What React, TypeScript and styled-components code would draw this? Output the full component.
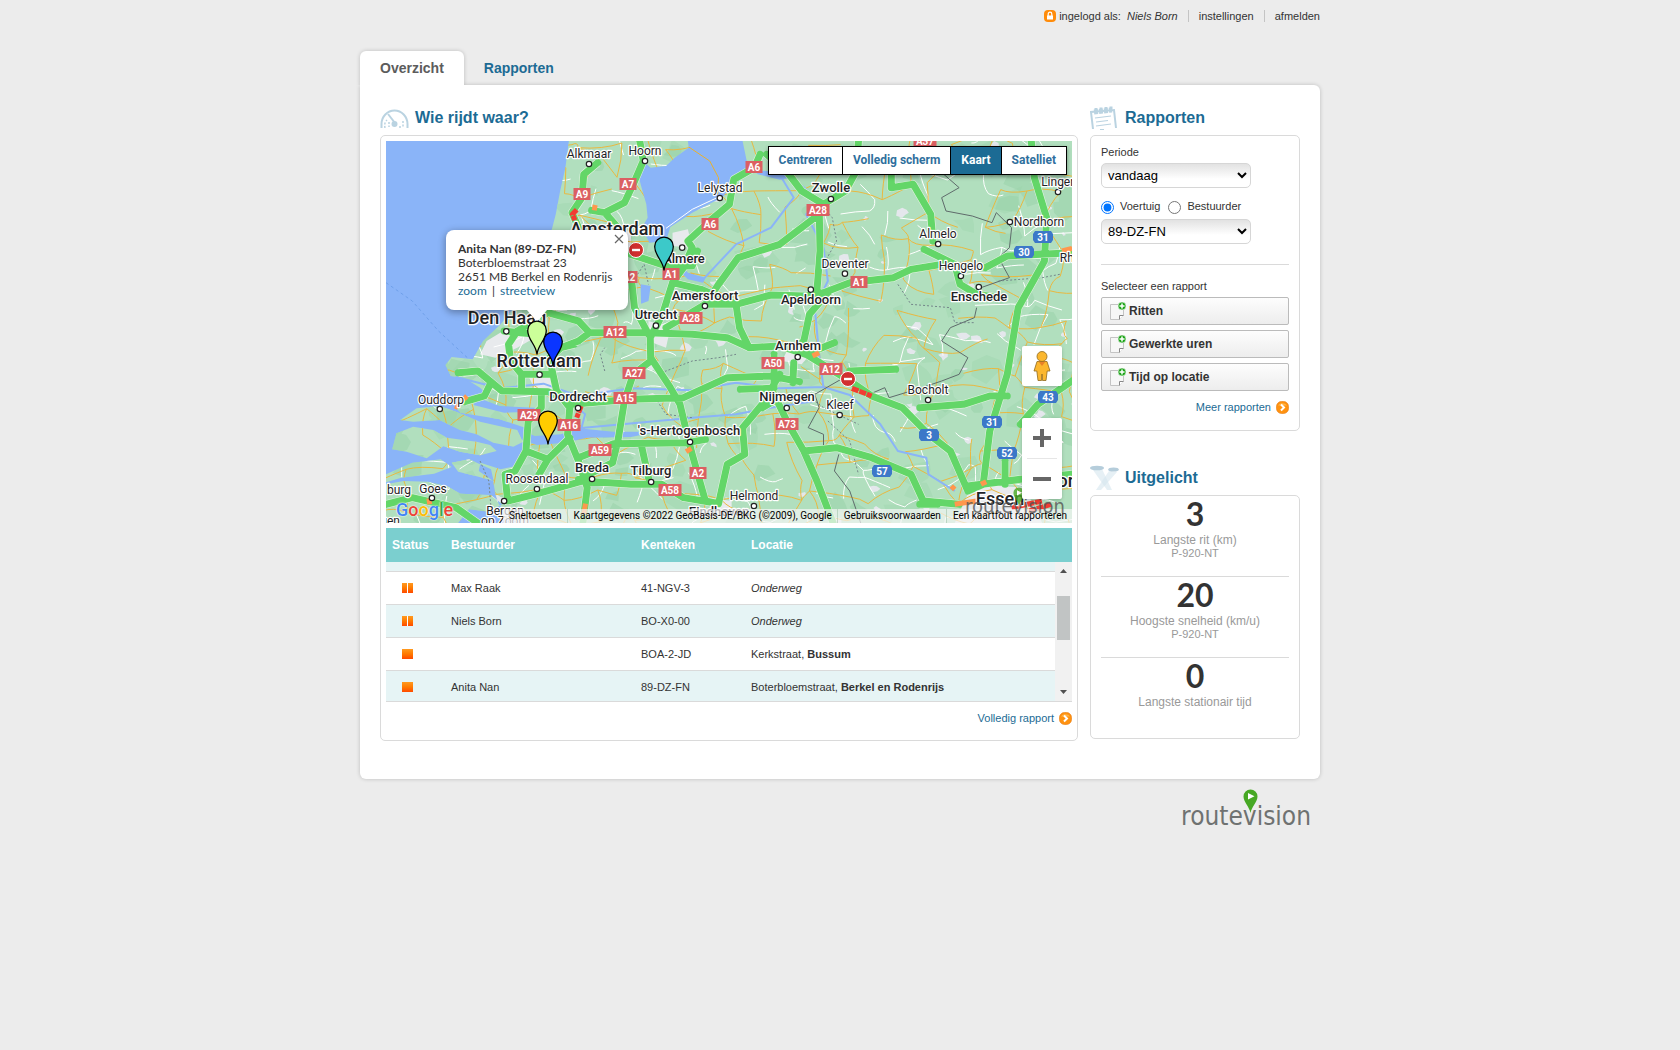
import React, { useLayoutEffect, useRef } from "react";
import styled, { createGlobalStyle } from "styled-components";

const blue = "#1c6b94";
const line = "#dadada";

const GlobalStyle = createGlobalStyle`
  *, *::before, *::after { box-sizing: border-box; }
  body {
    margin: 0;
    background: #ececec;
    color: #333;
    font: 11px/14px "Liberation Sans", Arial, sans-serif;
  }
  a { color: ${blue}; text-decoration: none; }
  button, select { font-family: inherit; }
`;

const Page = styled.div`
  width: 100%;
  max-width: 960px;
  margin: 0 auto;
`;

const UserBar = styled.header`
  display: flex;
  justify-content: flex-end;
  align-items: center;
  height: 32px;
`;

const UserItem = styled.span`
  display: flex;
  align-items: center;
  gap: 3px;
  & + & {
    margin-left: 10px;
    padding-left: 10px;
    border-left: 1px solid #c4c4c4;
    line-height: 12px;
  }
  a { color: #333; }
  em { margin-left: 3px; }
`;

const Tabs = styled.nav`
  display: flex;
  margin-top: 19px;
`;

const Tab = styled.a<{ $active?: boolean }>`
  padding: 0 20px;
  font-size: 14px;
  font-weight: bold;
  line-height: 34px;
  border-radius: 6px 6px 0 0;
  color: ${(p) => (p.$active ? "#5c5c5c" : blue)};
  background: ${(p) => (p.$active ? "#fff" : "transparent")};
  box-shadow: ${(p) => (p.$active ? "0 0 4px rgba(0, 0, 0, 0.2)" : "none")};
  clip-path: inset(-4px -4px 0 -4px);
`;

const Card = styled.main`
  display: grid;
  grid-template-columns: minmax(0, 1fr) 210px;
  gap: 12px;
  padding: 16px 20px 38px;
  background: #fff;
  border-radius: 0 6px 6px 6px;
  box-shadow: 0 0 4px rgba(0, 0, 0, 0.2);
`;

const Heading = styled.div`
  display: grid;
  grid-template-columns: 35px 1fr;
  align-items: center;
  height: 34px;
  h2 {
    margin: 0;
    color: ${blue};
    font-size: 16px;
    line-height: 20px;
  }
`;

const Panel = styled.section<{ $pad: string }>`
  padding: ${(p) => p.$pad};
  border: 1px solid ${line};
  border-radius: 5px;
`;

const Side = styled.aside`
  display: flex;
  flex-direction: column;
  gap: 30px;
`;

const MoreLink = styled.a`
  display: flex;
  justify-content: flex-end;
  align-items: center;
  gap: 5px;
`;

/* ---------- map ---------- */

const MapFrame = styled.div`
  position: relative;
  height: 382px;
  overflow: hidden;
  background: #8ab4f8;
  font-family: Roboto, "Liberation Sans", sans-serif;
`;

const MapDrawing = styled.svg`
  position: absolute;
  inset: 0;
  width: 100%;
  height: 100%;
`;

const MapButtons = styled.div`
  position: absolute;
  top: 5px;
  right: 5px;
  display: flex;
  border: 1px solid #000;
  box-shadow: 0 2px 4px rgba(0, 0, 0, 0.4);
`;

const MapButton = styled.button<{ $active?: boolean }>`
  height: 27px;
  padding: 0 10px 2px;
  border: 0;
  font: 700 12px/24px Roboto, sans-serif;
  color: ${(p) => (p.$active ? "#fff" : "#2f6f9d")};
  background: ${(p) => (p.$active ? blue : "#fff")};
  & + & { border-left: 1px solid #000; }
`;

const InfoWindow = styled.div`
  position: absolute;
  left: 60px;
  top: 89px;
  width: 182px;
  height: 80px;
  padding: 12px 12px;
  border-radius: 8px;
  background: #fff;
  box-shadow: 0 2px 7px 1px rgba(0, 0, 0, 0.3);
  font: 12px/14px Lato, sans-serif;
  white-space: nowrap;
  &::after {
    content: "";
    position: absolute;
    left: 81px;
    top: 80px;
    border: 10px solid transparent;
    border-top: 12px solid #fff;
    border-bottom: 0;
  }
`;

const Divider = styled.span`
  margin: 0 2px;
`;

const CloseButton = styled.button`
  position: absolute;
  top: 3px;
  right: 3px;
  width: 12px;
  height: 12px;
  padding: 1px;
  border: 0;
  background: none;
  svg { display: block; }
`;

const PinLayer = styled(MapDrawing)`
  pointer-events: none;
`;

const MapControl = styled.div<{ $bottom: number }>`
  position: absolute;
  right: 10px;
  bottom: ${(p) => p.$bottom}px;
  width: 40px;
  background: #fff;
  border-radius: 2px;
  box-shadow: 0 1px 4px -1px rgba(0, 0, 0, 0.3);
  button {
    display: grid;
    place-items: center;
    width: 100%;
    height: 40px;
    padding: 0;
    border: 0;
    background: none;
  }
  hr {
    margin: 0 5px;
    border: 0;
    border-top: 1px solid #e6e6e6;
  }
`;

const Attribution = styled.div`
  position: absolute;
  right: 0;
  bottom: 0;
  display: flex;
  background: rgba(245, 245, 245, 0.7);
  font-size: 10px;
  line-height: 14px;
  white-space: nowrap;
  > * {
    padding: 0 5px 0 6px;
    color: #000;
  }
  > * + * { border-left: 1px solid rgba(150, 190, 160, 0.5); }
`;

const GoogleMark = styled.div`
  position: absolute;
  left: 10px;
  bottom: 4px;
  font: 500 18px/18px Roboto, sans-serif;
  text-shadow: 0 0 1px #fff, 0 0 2px #fff;
`;

const Letter = styled.span<{ $c: string }>`
  color: ${(p) => p.$c};
`;

/* Everything below is surveyed on a 1568 x 1146 grid; the map is 686 x 382. */
const GX = 686 / 1568;
const GY = 1 / 3;

const land = [
  "M418 0L410 80 398 150 388 220 380 260 360 350 310 470 262 550 222 600 198 655 150 648 136 672 148 705 180 712 215 740 232 762 200 775 160 800 170 815 260 835 318 860 330 900 315 940 296 975 262 985 216 965 212 990 245 1020 250 1060 258 1090 300 1146 1568 1146 1568 0Z",
  "M32 837L70 802 123 795 169 817 215 842 300 867 314 902 291 917 245 905 207 880 169 867 123 837 62 842Z",
  "M24 877L62 857 108 867 139 890 207 902 238 912 253 930 215 943 169 932 131 916 93 952 47 932 14 925Z",
  "M0 1000L60 965 125 955 150 978 110 998 35 1010 0 1024Z",
  "M150 965L190 955 240 985 246 1020 205 1005 165 992Z",
  "M0 1030L40 1020 95 1022 140 1036 170 1058 240 1062 266 1090 235 1112 190 1105 165 1146 0 1146Z",
];

const water = [
  "M690 0L692 20 660 50 640 75 605 80 585 58 575 90 582 130 595 190 598 230 585 260 602 305 640 300 650 258 700 215 770 168 796 120 828 82 815 0Z",
  "M300 862L340 885 400 880 440 862 520 872 620 872 560 888 460 890 410 905 345 912 310 895Z",
  "M840 88L905 92 925 110 900 116 850 100Z",
  "M582 430L605 435 600 480 583 488Z",
  "M640 320L690 395 730 410 725 425 690 415 640 350Z",
  "M210 770L260 795 340 800 350 812 270 815 200 792Z",
];

const rivers = [
  "M160 708L260 742 360 728 440 765 560 742 700 748 800 725 900 742 1000 738 1060 762 1130 850 1170 930 1235 950 1240 1000 1300 1050",
  "M725 415L750 380 800 310 880 260 932 170 905 112",
  "M440 862L540 850 700 830 800 820 880 800 980 780",
  "M1000 740L990 640 980 500 1010 420 1000 320 960 220 990 180 920 100",
  "M400 900L445 870 455 820 430 790",
];

const motorways = [
  "M484 65L452 100 448 170 425 215 440 260",
  "M580 0L588 60 565 130 545 185 500 215 470 208M500 215L530 260",
  "M855 40L842 80 795 115 785 190 740 240 690 300 700 320 680 380 655 425",
  "M560 340L640 375 700 375 712 330M655 425L720 445 800 490 880 462 960 465 1000 455 1060 425 1160 410 1200 385 1270 370",
  "M640 560L730 490 760 430 805 350 900 310 985 225 1000 190 950 150 915 90 870 40M1000 190L1050 150 1075 90 1080 0",
  "M990 190L992 330 985 450M1010 455L968 520 955 600 935 620",
  "M655 425L632 520 604 590 605 660 565 700 545 780 530 900 518 965 440 1015",
  "M560 400L568 500 600 580M605 650L650 740 672 790 690 890 700 940 730 1080 760 1088 780 970 820 940 815 860 860 790 900 700",
  "M300 570L370 515 440 540 465 575 600 575 700 580 780 590 830 620 900 615 960 640 1060 720 1110 765 1180 800 1240 880 1290 930 1330 1050",
  "M740 490L800 490 808 560 830 620M440 600L465 575M440 600L400 620 375 650",
  "M165 695L210 690 265 750 370 752 400 770 425 790 560 775 680 770 780 710 880 705 945 722 M930 725L932 665",
  "M375 660L390 750 420 800 415 880 440 960 460 1040 450 1146",
  "M355 760L355 800 325 840 320 930 295 990 272 1000 278 1080 340 1060 450 1020 560 1030 630 1030 680 1070 760 1088",
  "M320 930L370 955 420 890M370 955L350 1000M440 950L520 908 690 905 730 895M585 920L600 1010",
  "M810 745L880 742 920 850 955 930 1030 920 1110 950 1200 1000 1228 1080 1310 1090M955 930L985 1020 1022 1146",
  "M1475 0L1482 110 1510 230 1505 360 1445 500 1420 700 1380 870 1365 1030 1330 1050",
  "M1370 380L1420 345 1568 335M1155 90L1155 140 1205 130 1245 220 1250 300M1230 325L1300 370 1312 430 1350 460 1400 470",
  "M1220 800L1320 790 1380 765 1420 765M1568 720L1490 790 1450 850M1415 960L1415 1030M1330 1035L1450 1015 1568 1000",
  "M1060 690L1165 685M960 640L1025 605M887 640L887 740M900 770L860 800",
  "M300 570L280 610 285 660 310 700 375 700M310 700L310 750M240 725L225 765 180 782M430 610L400 620 345 580 270 570",
  "M0 1090L60 1070 160 1100 210 1146M1220 1090L1260 1090",
];

const jams = [
  "M436 206L426 220 432 238",
  "M446 795L436 830",
  "M1065 742L1110 765",
  "M1430 1100L1500 1080M1470 1110L1520 1090",
];

const slow = [
  "M478 192L476 208",
  "M185 765L178 775M158 795L165 800",
  "M456 1088L452 1120",
  "M98 1072L100 1090",
  "M975 645L990 635",
  "M686 932L698 922",
  "M1300 1090L1350 1080M1360 1030L1372 1022M1292 1035L1300 1045M1545 330L1568 322",
];

const borders = [
  "M1275 100L1310 140 1270 170 1280 210 1340 225 1385 245 1395 215 1430 260 1425 320 1400 350 1425 410 1360 440M1350 500L1345 530 1290 560 1270 600 1330 650 1310 700 1270 720 1225 740 1150 770 1140 740 1105 760M1040 715L980 760 990 800 965 860 1000 880 1000 925M1035 940L1025 990 1060 1050 1085 1146",
];

const dashes = [
  "M995 190L1020 230 1030 300 1000 370M1170 430L1200 490 1290 500 1300 545 1345 545M570 410L590 370 600 430M500 690L490 640 500 620M620 700L700 660 760 650 800 640",
  "M215 960L235 1020 240 1100M1010 840L1060 900 1080 1000M960 760L1000 800 1080 850M620 780L640 820 700 830M1540 400L1500 410 1400 420",
];

const seaLine = ["M0 425L60 480 120 570 190 655"];

const rng = (seed: number) => () => {
  seed = (seed * 16807) % 2147483647;
  return seed / 2147483647;
};

/* Local roads: a jittered lattice with a share of its links dropped. */
const lattice = (seed: number, stepX: number, stepY: number, keep: number) => {
  const rand = rng(seed);
  const cols = Math.ceil(1568 / stepX) + 1;
  const rows = Math.ceil(1146 / stepY) + 1;
  const pts = Array.from({ length: rows }, (_, r) =>
    Array.from({ length: cols }, (_, c) => [
      Math.round((c + (rand() - 0.5) * 0.9) * stepX),
      Math.round((r + (rand() - 0.5) * 0.9) * stepY),
    ]),
  );
  let d = "";
  const link = (a: number[], b: number[]) => {
    const mx = (a[0] + b[0]) / 2 + (rand() - 0.5) * stepX * 0.4;
    const my = (a[1] + b[1]) / 2 + (rand() - 0.5) * stepY * 0.4;
    if (rand() < keep) d += `M${a[0]} ${a[1]}Q${Math.round(mx)} ${Math.round(my)} ${b[0]} ${b[1]}`;
  };
  pts.forEach((row, r) =>
    row.forEach((p, c) => {
      if (c + 1 < cols) link(p, row[c + 1]);
      if (r + 1 < rows) link(p, pts[r + 1][c]);
    }),
  );
  return d;
};

const blobs = (seed: number, count: number, size: number) => {
  const rand = rng(seed);
  return Array.from({ length: count }, () => {
    const cx = rand() * 1568;
    const cy = rand() * 1146;
    const s = size * (0.4 + rand());
    const pts = Array.from({ length: 7 }, (_, i) => {
      const a = (i / 7) * Math.PI * 2;
      const r = s * (0.4 + rand() * 0.8);
      return `${Math.round(cx + Math.cos(a) * r)} ${Math.round(cy + Math.sin(a) * r)}`;
    });
    return `M${pts.join("L")}Z`;
  }).join("");
};

const yellowRoads = lattice(77, 66, 76, 0.6);
const whiteRoads = lattice(913, 44, 54, 0.2);
const woods = blobs(41, 130, 34);
const fields = blobs(1207, 100, 40);
const towns = blobs(505, 90, 12);

type Place = [string, number, number, number, number?];
const places: Place[] = [
  ["Alkmaar", 464, 52, 12], ["Hoorn", 592, 42, 12], ["Lelystad", 764, 153, 12],
  ["Zwolle", 1018, 154, 13, 500], ["Amsterdam", 527, 283, 18, 500], ["Almere", 682, 366, 13, 500],
  ["Utrecht", 617, 535, 13, 500], ["Amersfoort", 730, 478, 13, 500], ["Apeldoorn", 972, 490, 13, 500],
  ["Deventer", 1048, 382, 12], ["Almelo", 1261, 292, 12], ["Hengelo", 1314, 387, 12],
  ["Enschede", 1355, 481, 13, 500], ["Nordhorn", 1492, 254, 12], ["Lingen", 1538, 135, 12],
  ["Rheine", 1581, 364, 12], ["Den Haag", 277, 549, 18, 500], ["Rotterdam", 350, 679, 18, 500],
  ["Dordrecht", 439, 781, 13, 500], ["Ouddorp", 125, 789, 12], ["Arnhem", 941, 628, 13, 500],
  ["Nijmegen", 916, 781, 13, 500], ["Kleef", 1037, 804, 12], ["Bocholt", 1239, 759, 12],
  ["'s-Hertogenbosch", 693, 883, 13, 500], ["Breda", 471, 994, 13, 500], ["Tilburg", 606, 1003, 13, 500],
  ["Roosendaal", 346, 1026, 12], ["Goes", 107, 1056, 12], ["burg", 30, 1060, 12],
  ["Helmond", 841, 1078, 12], ["Bergen", 272, 1121, 12], ["op Zoom", 272, 1152, 12],
  ["Eindhoven", 760, 1126, 13, 500], ["Essen", 1404, 1093, 18, 500], ["Dor", 1540, 1039, 18, 500],
  ["gen", 10, 1152, 12],
];

const dots = [
  [464, 69], [592, 60], [763, 171], [1017, 174], [677, 320], [617, 554], [729, 495], [971, 446],
  [1049, 398], [1262, 309], [1314, 405], [1355, 438], [1426, 243], [1536, 153], [275, 571],
  [351, 701], [439, 801], [123, 804], [941, 648], [916, 801], [1037, 822], [1239, 777],
  [695, 903], [471, 1014], [606, 1023], [345, 1044], [105, 1071], [841, 1095], [270, 1080],
];

const shields: [string, number, number][] = [
  ["A9", 449, 158], ["A7", 554, 130], ["A6", 842, 79], ["A6", 741, 249], ["A28", 988, 206],
  ["A1", 1082, 422], ["A1", 652, 400], ["A2", 556, 409], ["A28", 697, 530], ["A12", 524, 572],
  ["A27", 567, 695], ["A15", 546, 770], ["A29", 327, 823], ["A16", 418, 851], ["A59", 489, 927],
  ["A2", 714, 996], ["A58", 649, 1048], ["A50", 885, 667], ["A12", 1018, 685], ["A73", 916, 848],
  ["A37", 1233, 0],
];

const routes: [string, number, number][] = [
  ["31", 1502, 288], ["30", 1458, 333], ["31", 1384, 843], ["43", 1513, 768],
  ["3", 1242, 882], ["52", 1420, 936], ["57", 1133, 990],
];

const Pin = ({ x, y, color }: { x: number; y: number; color: string }) => (
  <path
    transform={`translate(${Math.round(x * GX)} ${Math.round(y * GY)})`}
    d="M0 0.5C-0.5 -9 -9.3 -14 -9.3 -23.6A9.3 9.3 0 0 1 9.3 -23.6C9.3 -14 0.5 -9 0 0.5Z"
    fill={color}
    stroke="#000"
    strokeWidth="1.3"
  />
);

const NoEntry = ({ x, y }: { x: number; y: number }) => (
  <g transform={`translate(${Math.round(x * GX)} ${Math.round(y * GY)})`}>
    <circle r="7.5" fill="#d12f2f" stroke="#fff" strokeWidth="1" />
    <path d="M-4 0H4" stroke="#fff" strokeWidth="2.4" />
  </g>
);

const Strokes = ({ lines, color, width, dash, cap = "butt" }: {
  lines: string[]; color: string; width: number; dash?: string; cap?: "butt" | "round";
}) => (
  <path
    d={lines.join("")}
    fill="none"
    stroke={color}
    strokeWidth={width}
    strokeDasharray={dash}
    strokeLinejoin="round"
    strokeLinecap={cap}
    vectorEffect="non-scaling-stroke"
  />
);

const Terrain = () => (
  <MapDrawing viewBox="0 0 686 382" preserveAspectRatio="xMidYMid slice" aria-hidden="true">
    <defs>
      <clipPath id="land">
        <path d={land.join("")} />
      </clipPath>
    </defs>
    <g transform={`scale(${GX} ${GY})`}>
      <path d={land.join("")} fill="#b1dfbe" />
      <g clipPath="url(#land)">
        <path d={fields} fill="#a9dbb7" />
        <path d={woods} fill="#98d1a8" opacity="0.5" />
        <path d={towns} fill="#e4e7ec" />
        <path d="M280 560L340 590 300 620 250 650 215 640 230 600ZM320 690L390 700 400 750 340 745ZM600 540L650 560 640 620 600 600ZM470 265L560 270 560 320 470 310ZM1340 1030L1460 1040 1500 1146 1300 1146ZM920 620L970 640 950 670 905 660ZM740 1070L790 1080 790 1130 740 1125ZM655 275L690 265 700 320 655 315Z" fill="#e8eaed" />
        <Strokes lines={[whiteRoads]} color="#fff" width={1} />
        <Strokes lines={[yellowRoads]} color="#e9b840" width={1} />
      </g>
      <path d={water.join("")} fill="#8ab4f8" />
      <Strokes lines={rivers} color="#8ab4f8" width={2} />
      <Strokes lines={["M692 18L740 60 760 110 758 160"]} color="#e9b22f" width={1} />
      <Strokes lines={["M640 262L700 205 765 165"]} color="#fff" width={1} />
      <Strokes lines={borders} color="#5f6b6b" width={1} />
      <Strokes lines={dashes} color="#74868a" width={1} dash="2 2" />
      <Strokes lines={seaLine} color="#6fa0ea" width={1} dash="3 3" />
      <Strokes lines={motorways} color="#e6f6e4" width={8} />
      <Strokes lines={motorways} color="#63d668" width={7} cap="round" />
      <Strokes lines={slow} color="#ff974d" width={5} />
      <Strokes lines={jams} color="#f23c32" width={5} dash="7 1" />
    </g>
    <g fontFamily="Roboto, sans-serif" textAnchor="middle">
      {shields.map(([t, x, y], i) => {
        const w = t.length > 2 ? 23 : 17;
        const px = Math.round(x * GX);
        const py = Math.round(y * GY);
        return (
          <g key={i}>
            <rect x={px - w / 2} y={py - 6} width={w} height="12" fill="#db5f62" />
            <text x={px} y={py + 4} fontSize="10" fontWeight="700" fill="#fff">{t}</text>
          </g>
        );
      })}
      {routes.map(([t, x, y], i) => {
        const px = Math.round(x * GX);
        const py = Math.round(y * GY);
        return (
          <g key={i}>
            <path d={`M${px - 8} ${py - 6}H${px + 8}L${px + 10} ${py - 3}V${py + 3}L${px + 8} ${py + 6}H${px - 8}L${px - 10} ${py + 3}V${py - 3}Z`} fill="#3c78c8" />
            <text x={px} y={py + 4} fontSize="10" fontWeight="700" fill="#fff">{t}</text>
          </g>
        );
      })}
      {dots.map(([x, y], i) => (
        <circle key={i} cx={x * GX} cy={y * GY} r="2.7" fill="#fff" stroke="#222" strokeWidth="1.2" />
      ))}
      <g fill="#1f2326" stroke="#fff" strokeWidth="2.4" strokeLinejoin="round" paintOrder="stroke">
        {places.map(([name, x, y, size, weight = 400]) => (
          <text key={name} x={Math.round(x * GX)} y={Math.round(y * GY)} fontSize={size} fontWeight={weight}>{name}</text>
        ))}
      </g>
    </g>
    <NoEntry x={571} y={327} />
    <NoEntry x={1055} y={714} />
  </MapDrawing>
);

/* ---------- brand ---------- */

const Brand = styled.div<{ $small?: boolean }>`
  position: ${(p) => (p.$small ? "absolute" : "relative")};
  right: ${(p) => (p.$small ? "7px" : "auto")};
  bottom: ${(p) => (p.$small ? "4px" : "auto")};
  opacity: ${(p) => (p.$small ? 0.8 : 1)};
  font: ${(p) => (p.$small ? "20px/26px" : "26px/38px")} "DejaVu Sans Condensed", "Noto Sans", sans-serif;
  color: ${(p) => (p.$small ? "#555" : "#6f7271")};
  svg {
    position: absolute;
    left: 48%;
    top: ${(p) => (p.$small ? "-6px" : "-8px")};
    height: ${(p) => (p.$small ? "20px" : "25px")};
  }
`;

const Footer = styled.footer`
  display: flex;
  justify-content: flex-end;
  padding: 18px 9px;
`;

const RouteVision = ({ small }: { small?: boolean }) => (
  <Brand $small={small}>
    routevision
    <svg viewBox="0 0 15 25" aria-hidden="true">
      <path d="M7.5 24C6.5 18 .5 13 .5 7.5A7 7 0 0 1 14.5 7.5C14.5 13 8.5 18 7.5 24Z" fill="#47a824" />
      <path d="M5 4L11.5 7.3 5 10.5Z" fill="#fff" />
    </svg>
  </Brand>
);

/* ---------- vehicle table ---------- */

const TableArea = styled.div`
  position: relative;
  margin: 5px 0 9px;
  border-bottom: 1px solid ${line};
`;

const TableScroll = styled.div`
  height: 173px;
  overflow: hidden;
`;

const Table = styled.table`
  width: 100%;
  table-layout: fixed;
  border-collapse: separate;
  border-spacing: 0;
  text-align: left;
  th, td { padding: 0 6px; }
  th {
    position: sticky;
    top: 0;
    height: 34px;
    background: #7bcfcf;
    color: #fff;
    font-size: 12px;
  }
  td {
    height: 33px;
    border-bottom: 1px solid ${line};
  }
  tbody tr:nth-child(even) { background: #e6f4f5; }
  td:first-child { padding-left: 16px; }
  td svg { display: block; }
`;

const Col = styled.col<{ $w?: number }>`
  width: ${(p) => (p.$w ? `${p.$w}px` : "auto")};
`;

const ScrollTrack = styled.div`
  position: absolute;
  right: 0;
  top: 34px;
  bottom: 0;
  display: flex;
  flex-direction: column;
  justify-content: space-between;
  align-items: center;
  width: 17px;
  padding: 7px 0;
  background: #f1f1f1;
`;

const ScrollThumb = styled.div`
  position: absolute;
  top: 34px;
  left: 2px;
  right: 2px;
  height: 44px;
  background: #c1c4c4;
`;

const Status = ({ paused }: { paused?: boolean }) => (
  <svg width="11" height="10" role="img" aria-label={paused ? "rijdend" : "stilstand"}>
    <defs>
      <linearGradient id="status" x2="0" y2="1">
        <stop offset="0" stopColor="#ff9a20" />
        <stop offset="0.5" stopColor="#ff7a00" />
        <stop offset="1" stopColor="#ff4a00" />
      </linearGradient>
    </defs>
    <rect width="11" height="10" fill="url(#status)" />
    {paused && <path d="M5.5 0V10" stroke="#fff" />}
  </svg>
);

type Vehicle = { driver: string; plate: string; street?: string; city?: string };
const vehicles: Vehicle[] = [
  { driver: "", plate: "" },
  { driver: "", plate: "" },
  { driver: "Max Raak", plate: "41-NGV-3" },
  { driver: "Niels Born", plate: "BO-X0-00" },
  { driver: "", plate: "BOA-2-JD", street: "Kerkstraat", city: "Bussum" },
  { driver: "Anita Nan", plate: "89-DZ-FN", street: "Boterbloemstraat", city: "Berkel en Rodenrijs" },
];

const VehicleTable = () => {
  const scroller = useRef<HTMLDivElement>(null);
  useLayoutEffect(() => {
    if (scroller.current) scroller.current.scrollTop = 56;
  }, []);
  return (
    <TableArea>
      <TableScroll ref={scroller}>
        <Table>
          <colgroup><Col $w={59} /><Col $w={190} /><Col $w={110} /><Col /></colgroup>
          <thead>
            <tr><th>Status</th><th>Bestuurder</th><th>Kenteken</th><th>Locatie</th></tr>
          </thead>
          <tbody>
            {vehicles.map((v, i) => (
              <tr key={i}>
                <td>{v.plate && <Status paused={!v.city} />}</td>
                <td>{v.driver}</td>
                <td>{v.plate}</td>
                <td>
                  {v.city ? <>{v.street}, <b>{v.city}</b></> : v.plate && <em>Onderweg</em>}
                </td>
              </tr>
            ))}
          </tbody>
        </Table>
      </TableScroll>
      <ScrollTrack aria-hidden="true">
        <svg width="7" height="4"><path d="M0 4L3.5 0 7 4Z" fill="#505050" /></svg>
        <ScrollThumb />
        <svg width="7" height="4"><path d="M0 0L3.5 4 7 0Z" fill="#505050" /></svg>
      </ScrollTrack>
    </TableArea>
  );
};

/* ---------- side panels ---------- */

const Label = styled.label`
  display: block;
  padding: 9px 0 4px;
  line-height: 14px;
`;

const Select = styled.select`
  display: block;
  width: 150px;
  height: 25px;
  padding: 0 2px;
  border: 1px solid #d6d6d6;
  border-radius: 5px;
  background: linear-gradient(#e2e2e2, #fff 65%);
  color: #000;
  font-size: 13px;
`;

const Radios = styled.div`
  display: flex;
  align-items: center;
  gap: 6px;
  height: 31px;
  padding-top: 5px;
  input {
    width: 13px;
    height: 13px;
    margin: 2px 0 0;
  }
  label + input { margin-left: 2px; }
`;

const Rule = styled.hr`
  margin: 0;
  border: 0;
  border-top: 1px solid ${line};
`;

const FormRule = styled(Rule)`
  margin: 20px 0 5px;
`;

const ReportList = styled.div`
  display: grid;
  gap: 5px;
  padding: 0 0 9px;
`;

const Caption = styled.div`
  padding: 9px 0 4px;
`;

const ReportButton = styled.button`
  display: flex;
  align-items: center;
  gap: 3px;
  height: 28px;
  padding: 0 7px;
  border: 1px solid #bbb;
  border-radius: 2px;
  background: linear-gradient(#fdfdfd, #ededed);
  color: #333;
  font-size: 12px;
  font-weight: bold;
`;

const Stat = styled.div`
  height: 80px;
  padding-top: 2px;
  text-align: center;
  color: #999;
  font-size: 12px;
  line-height: 15px;
  strong {
    display: block;
    padding-bottom: 3px;
    color: #333;
    font: bold 32px/32px Lato, sans-serif;
  }
  small {
    display: block;
    font-size: 11px;
    line-height: 11px;
  }
`;

const PageIcon = () => (
  <svg width="17" height="18" viewBox="0 0 17 18" aria-hidden="true">
    <path d="M1.5 2.5H14.5V13L10.5 17.5H1.5Z" fill="#f7f7f7" stroke="#c4c4c4" />
    <path d="M10.5 17.5V13.5H14.5" fill="#fff" stroke="#888" />
    <circle cx="13" cy="4" r="4" fill="#1fa51a" stroke="#f7f7f7" strokeWidth="0.6" />
    <path d="M13 1.5V6.5M10.5 4H15.5" stroke="#fff" strokeWidth="1.5" />
  </svg>
);

const ArrowIcon = () => (
  <svg width="13" height="13" viewBox="0 0 13 13" aria-hidden="true">
    <rect x="0.5" y="0.5" width="12" height="12" rx="5" fill="#ff9210" stroke="#e8790a" strokeWidth="0.6" />
    <path d="M2 4.5A5 4 0 0 1 11 4.5Z" fill="#ffb54a" />
    <path d="M5 3.5L8 6.5 5 9.5" fill="none" stroke="#fff" strokeWidth="2" />
  </svg>
);

const LockIcon = () => (
  <svg width="12" height="12" viewBox="0 0 12 12" aria-hidden="true">
    <rect width="12" height="12" rx="4" fill="#ff8c0a" />
    <rect x="3" y="5.5" width="6" height="4" fill="#fff" />
    <path d="M4.2 6V4A1.8 1.8 0 0 1 7.8 4V6" fill="none" stroke="#fff" strokeWidth="1.2" />
  </svg>
);

const GaugeIcon = () => (
  <svg width="29" height="19" viewBox="0 0 29 19" aria-hidden="true" fill="none" stroke="#bad3e1">
    <path d="M1.5 19V15A13 13.5 0 0 1 27.5 15V19" strokeWidth="2" />
    <path d="M8 5L15 14" strokeWidth="2" />
    <circle cx="14.5" cy="15" r="3" fill="#bad3e1" stroke="none" />
    <path d="M5 19C4 14 6 12 7 11M9 13V18M20 19V17M23 12V19" strokeDasharray="2 1.5" strokeWidth="1.5" />
  </svg>
);

const NotesIcon = () => (
  <svg width="27" height="24" viewBox="0 0 27 24" aria-hidden="true" fill="none" stroke="#bad3e1">
    <path d="M3 23L1 6 24 4 26 22" strokeWidth="2" />
    <path d="M4 6L22 4" strokeWidth="5" strokeDasharray="4 1" />
    <path d="M6 5V2M11 4.5V1.5M16 4V1M21 3.5V0.5" strokeWidth="3" />
    <path d="M5 12L21 10M6 16L18 14.5M6 20L21 18M10 23.5H14" strokeWidth="1.2" />
  </svg>
);

const LightsIcon = () => (
  <svg width="29" height="26" viewBox="0 0 29 26" aria-hidden="true">
    <path d="M3 5L12 4 22 25H17Z" fill="#d5e6ee" opacity="0.6" />
    <path d="M19 6L27 7 11 25H6Z" fill="#d5e6ee" opacity="0.6" />
    <ellipse cx="7" cy="3" rx="7" ry="2.3" fill="#b5cddb" />
    <ellipse cx="23.5" cy="4.5" rx="5.3" ry="2" fill="#b5cddb" />
  </svg>
);

const Pegman = () => (
  <svg width="18" height="30" viewBox="0 0 18 30" aria-hidden="true">
    <path d="M4 10.5H14L17 20H14.2L13 29.5H9.5L9 23 8.500 29.5H5L3.800 20H1Z" fill="#fbb72f" stroke="#8f6a1e" strokeWidth="0.8" />
    <path d="M5.5 10.5L9 15 12.5 10.5Z" fill="#e8812a" />
    <circle cx="9" cy="5.5" r="5" fill="#fbb72f" stroke="#8f6a1e" strokeWidth="0.8" />
  </svg>
);

const stats = [
  { value: "3", label: "Langste rit (km)", plate: "P-920-NT" },
  { value: "20", label: "Hoogste snelheid (km/u)", plate: "P-920-NT" },
  { value: "0", label: "Langste stationair tijd" },
];

export default function App() {
  return (
    <>
      <GlobalStyle />
      <Page>
        <UserBar>
          <UserItem><LockIcon /> ingelogd als: <em>Niels Born</em></UserItem>
          <UserItem><a href="#instellingen">instellingen</a></UserItem>
          <UserItem><a href="#afmelden">afmelden</a></UserItem>
        </UserBar>
        <Tabs>
          <Tab href="#overzicht" $active>Overzicht</Tab>
          <Tab href="#rapporten">Rapporten</Tab>
        </Tabs>
        <Card>
          <div>
            <Heading><GaugeIcon /><h2>Wie rijdt waar?</h2></Heading>
            <Panel $pad="5px 5px 15px">
              <MapFrame>
                <Terrain />
                <GoogleMark>
                  <Letter $c="#4285f4">G</Letter><Letter $c="#ea4335">o</Letter><Letter $c="#fbbc05">o</Letter><Letter $c="#4285f4">g</Letter><Letter $c="#34a853">l</Letter><Letter $c="#ea4335">e</Letter>
                </GoogleMark>
                <InfoWindow>
                  <b>Anita Nan (89-DZ-FN)</b><br />
                  Boterbloemstraat 23<br />
                  2651 MB Berkel en Rodenrijs<br />
                  <a href="#zoom">zoom</a> <Divider>|</Divider> <a href="#streetview">streetview</a>
                  <CloseButton aria-label="Sluiten">
                    <svg width="10" height="10"><path d="M1 1L9 9M9 1L1 9" stroke="#666" strokeWidth="1.2" /></svg>
                  </CloseButton>
                </InfoWindow>
                <PinLayer viewBox="0 0 686 382" preserveAspectRatio="xMidYMid slice" aria-hidden="true">
                  <Pin x={635} y={387} color="#3cc9c9" />
                  <Pin x={345} y={639} color="#ccff99" />
                  <Pin x={381} y={672} color="#0a35ff" />
                  <Pin x={370} y={909} color="#ffcc00" />
                </PinLayer>
                <Attribution>
                  <span>Sneltoetsen</span>
                  <span>Kaartgegevens ©2022 GeoBasis-DE/BKG (©2009), Google</span>
                  <a href="#voorwaarden">Gebruiksvoorwaarden</a>
                  <a href="#kaartfout">Een kaartfout rapporteren</a>
                </Attribution>
                <RouteVision small />
                <MapButtons>
                  <MapButton>Centreren</MapButton>
                  <MapButton>Volledig scherm</MapButton>
                  <MapButton $active>Kaart</MapButton>
                  <MapButton>Satelliet</MapButton>
                </MapButtons>
                <MapControl $bottom={137}>
                  <button aria-label="Street View"><Pegman /></button>
                </MapControl>
                <MapControl $bottom={24}>
                  <button aria-label="Inzoomen"><svg width="18" height="18"><path d="M0 9H18M9 0V18" stroke="#666" strokeWidth="4" /></svg></button>
                  <hr />
                  <button aria-label="Uitzoomen"><svg width="18" height="18"><path d="M0 9H18" stroke="#666" strokeWidth="4" /></svg></button>
                </MapControl>
              </MapFrame>
              <VehicleTable />
              <MoreLink href="#volledig">Volledig rapport <ArrowIcon /></MoreLink>
            </Panel>
          </div>
          <Side>
            <div>
              <Heading><NotesIcon /><h2>Rapporten</h2></Heading>
              <Panel $pad="0 10px 16px">
                <Label htmlFor="periode">Periode</Label>
                <Select id="periode" defaultValue="vandaag"><option>vandaag</option></Select>
                <Radios>
                  <input type="radio" name="soort" id="voertuig" defaultChecked />
                  <label htmlFor="voertuig">Voertuig</label>
                  <input type="radio" name="soort" id="bestuurder" />
                  <label htmlFor="bestuurder">Bestuurder</label>
                </Radios>
                <Select aria-label="Voertuig" defaultValue="89-DZ-FN"><option>89-DZ-FN</option></Select>
                <FormRule />
                <Caption>Selecteer een rapport</Caption>
                <ReportList>
                  <ReportButton><PageIcon />Ritten</ReportButton>
                  <ReportButton><PageIcon />Gewerkte uren</ReportButton>
                  <ReportButton><PageIcon />Tijd op locatie</ReportButton>
                </ReportList>
                <MoreLink href="#meer">Meer rapporten <ArrowIcon /></MoreLink>
              </Panel>
            </div>
            <div>
              <Heading><LightsIcon /><h2>Uitgelicht</h2></Heading>
              <Panel $pad="0 10px">
                {stats.map((s, i) => (
                  <React.Fragment key={s.label}>
                    {i > 0 && <Rule />}
                    <Stat>
                      <strong>{s.value}</strong>
                      {s.label}
                      {s.plate && <small>{s.plate}</small>}
                    </Stat>
                  </React.Fragment>
                ))}
              </Panel>
            </div>
          </Side>
        </Card>
        <Footer><RouteVision /></Footer>
      </Page>
    </>
  );
}
